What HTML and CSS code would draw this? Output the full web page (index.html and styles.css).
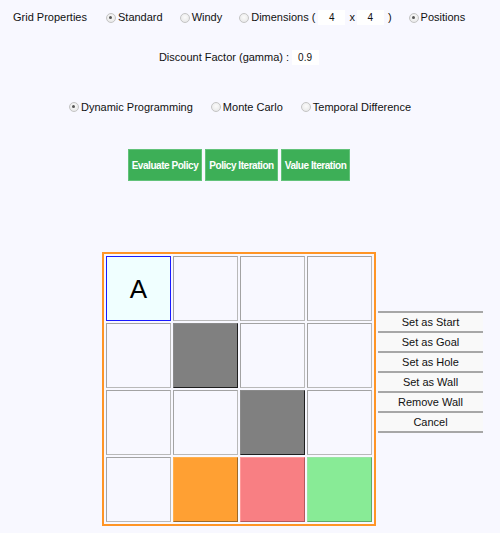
FILE: index.html
```html
<!DOCTYPE html>
<html>
<head>
<meta charset="utf-8">
<link rel="stylesheet" href="styles.css">
</head>
<body>
<div class="page">
  <div class="props">
    <span class="label">Grid Properties</span>
    <span class="opt"><span class="radio on"></span>Standard</span>
    <span class="opt"><span class="radio"></span>Windy</span>
    <span class="opt"><span class="radio"></span>Dimensions (</span>
    <span class="num num-a">4</span>
    <span class="times">x</span>
    <span class="num num-b">4</span>
    <span class="paren">)</span>
    <span class="opt"><span class="radio on"></span>Positions</span>
  </div>

  <div class="discount">
    <span>Discount Factor (gamma) :</span>
    <span class="gamma">0.9</span>
  </div>

  <div class="algos">
    <span class="opt first"><span class="radio on"></span>Dynamic Programming</span>
    <span class="opt"><span class="radio"></span>Monte Carlo</span>
    <span class="opt"><span class="radio"></span>Temporal Difference</span>
  </div>

  <div class="actions">
    <button class="btn">Evaluate Policy</button>
    <button class="btn">Policy Iteration</button>
    <button class="btn">Value Iteration</button>
  </div>

  <div class="board-wrap">
    <div class="board">
      <div class="cell agent">A</div>
      <div class="cell"></div>
      <div class="cell"></div>
      <div class="cell"></div>
      <div class="cell"></div>
      <div class="cell wall"></div>
      <div class="cell"></div>
      <div class="cell"></div>
      <div class="cell"></div>
      <div class="cell"></div>
      <div class="cell wall"></div>
      <div class="cell"></div>
      <div class="cell"></div>
      <div class="cell start"></div>
      <div class="cell hole"></div>
      <div class="cell goal"></div>

      <ul class="menu">
        <li>Set as Start</li>
        <li>Set as Goal</li>
        <li>Set as Hole</li>
        <li>Set as Wall</li>
        <li>Remove Wall</li>
        <li>Cancel</li>
      </ul>
    </div>
  </div>
</div>
</body>
</html>
```

FILE: styles.css
```css
html, body {
  margin: 0;
  padding: 0;
  background: #f8f8ff;
}
body {
  font-family: "Liberation Sans", Arial, sans-serif;
  font-size: 11px;
  color: #111;
}
.page {
  width: 478px;
  display: flex;
  flex-direction: column;
}

/* radios */
.opt {
  display: inline-flex;
  align-items: center;
  margin-left: 17px;
  white-space: nowrap;
}
.opt.first { margin-left: 0; }
.radio {
  width: 8px;
  height: 8px;
  border-radius: 50%;
  border: 1px solid #c4c4c4;
  background: radial-gradient(circle at 50% 40%, #fbfbfb 0%, #e4e4e4 100%);
  margin-right: 2px;
  position: relative;
  box-sizing: content-box;
}
.radio.on::after {
  content: "";
  position: absolute;
  left: 2.5px;
  top: 2.5px;
  width: 3px;
  height: 3px;
  border-radius: 50%;
  background: #555;
}

/* row 1 */
.props {
  display: flex;
  align-items: center;
  height: 15px;
  margin-top: 10px;
  padding-left: 13px;
  line-height: 15px;
}
.label { margin-right: 2px; }
.num {
  width: 27px;
  height: 15px;
  background: #fff;
  text-align: center;
  font-size: 10px;
  line-height: 15px;
}
.num-a { margin-left: 3px; }
.times { margin-left: 4px; margin-right: 2px; }
.paren { margin-left: 4px; }

/* discount */
.discount {
  display: flex;
  justify-content: center;
  align-items: center;
  height: 15px;
  margin-top: 25px;
  line-height: 15px;
}
.gamma {
  width: 21px;
  height: 15px;
  padding-left: 6px;
  margin-left: 3px;
  background: #fff;
  font-size: 10px;
  line-height: 15px;
}

/* algorithms */
.algos {
  display: flex;
  justify-content: center;
  align-items: center;
  height: 15px;
  margin-top: 34px;
  padding-left: 2px;
}
.algos .opt { margin-left: 18px; }
.algos .opt.first { margin-left: 0; }

/* buttons */
.actions {
  display: flex;
  justify-content: center;
  gap: 3px;
  margin-top: 35px;
}
.btn {
  height: 32px;
  padding: 0 3px;
  border: 1px solid #62c27a;
  background: #3daf57;
  color: #fff;
  font-family: "Liberation Sans", Arial, sans-serif;
  font-weight: bold;
  font-size: 10px;
  letter-spacing: -0.45px;
  cursor: pointer;
}

/* board */
.board-wrap {
  display: flex;
  justify-content: center;
  margin-top: 71px;
}
.board {
  position: relative;
  display: grid;
  grid-template-columns: repeat(4, 65px);
  grid-auto-rows: 65px;
  gap: 2px;
  padding: 2px;
  border: 2px solid #ff9526;
}
.cell {
  box-sizing: border-box;
  background: #f8f8ff;
  border: 1px solid #a3a3a3;
  border-right-color: #b9b9b9;
  border-bottom-color: #b9b9b9;
}
.agent {
  background: #f0ffff;
  border: 1px solid #1a1aff;
  display: flex;
  align-items: center;
  justify-content: center;
  font-size: 26px;
  color: #000;
  padding-top: 1px;
}
.wall {
  background: #808080;
  border-color: #8a8a8a #1e1e1e #1e1e1e #8a8a8a;
}
.start {
  background: #ffa033;
  border-color: #ffb04d #9c6a2a #9c6a2a #ffb04d;
}
.hole {
  background: #f87f83;
  border-color: #f99 #b35a5e #b35a5e #f99;
}
.goal {
  background: #88eb96;
  border-color: #9ae4a4 #5fa86a #5fa86a #9ae4a4;
}

/* context menu */
.menu {
  position: absolute;
  left: calc(100% + 4px);
  top: 57px;
  width: 105px;
  margin: 0;
  padding: 0;
  list-style: none;
  border-bottom: 2px solid #a7a7a7;
}
.menu li {
  height: 18px;
  line-height: 18px;
  border-top: 2px solid #a7a7a7;
  background: #f9f9f9;
  text-align: center;
  color: #111;
}
```
